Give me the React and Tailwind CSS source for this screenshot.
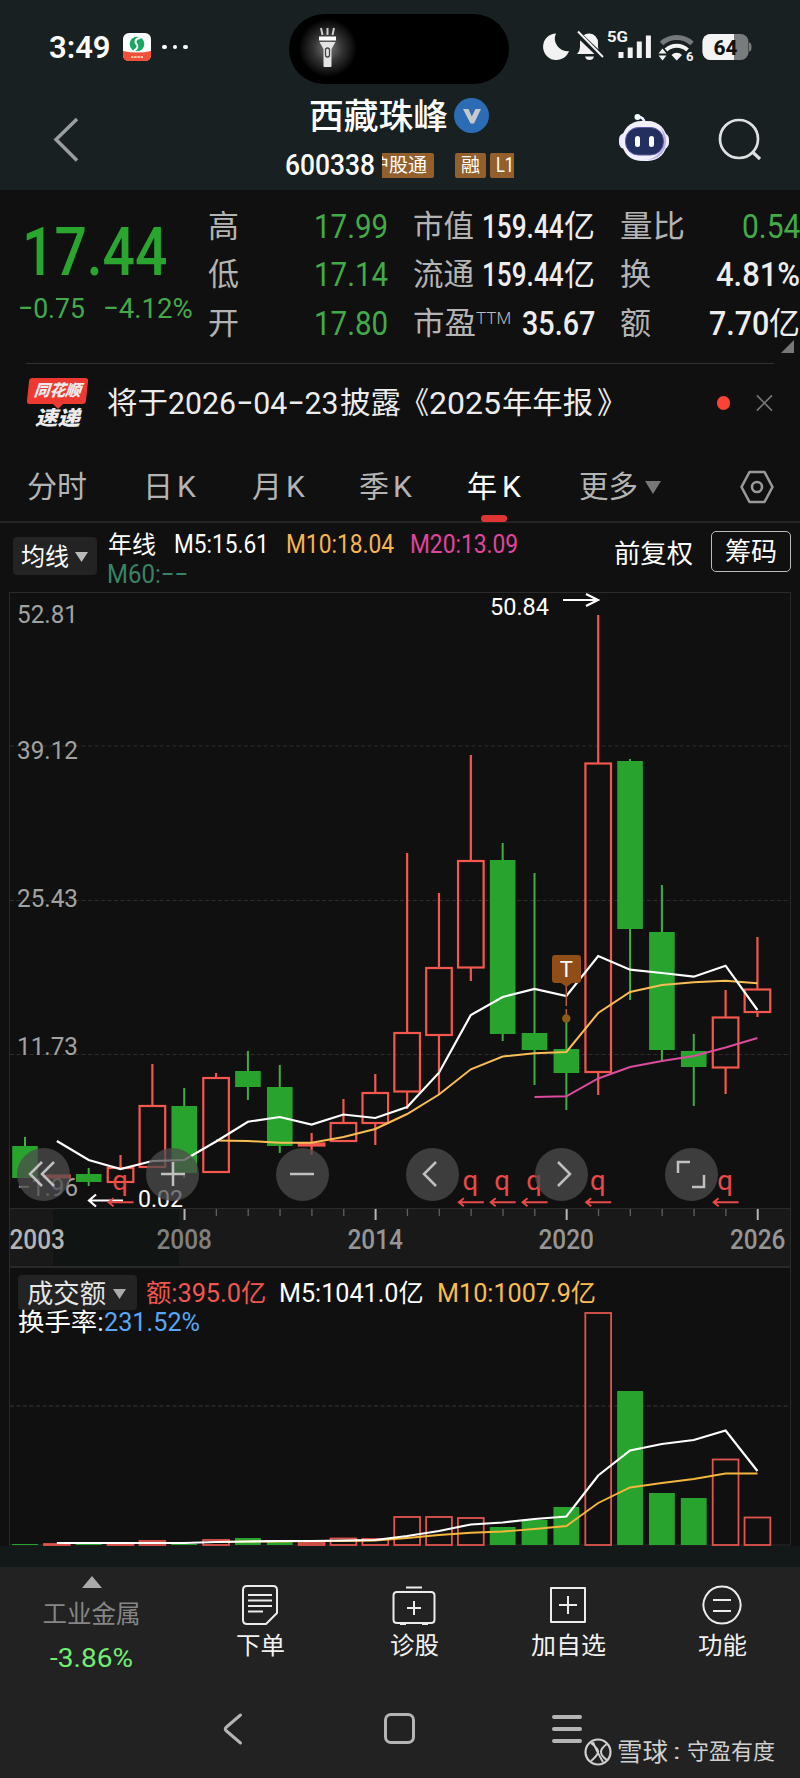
import { useLayoutEffect, useRef, useState } from 'react'

const RED = '#f4574e'
const GREEN = '#28a42e'

// x of the candle for a given index (0 = 2003)
const cx = (i) => 25 + i * 31.845

// [up, bodyTop, bodyBottom, high, low, volumeTop]
const years = [
  [false, 1146, 1178, 1137, 1178, 1544],
  [true, 1175.5, 1177.5, 1175, 1178, 1544],
  [false, 1174, 1182, 1168, 1186, 1544],
  [true, 1168, 1182, 1155, 1182, 1544],
  [true, 1106, 1167, 1064, 1167, 1541],
  [false, 1106, 1173, 1088, 1178, 1544],
  [true, 1078, 1172, 1073, 1172, 1540],
  [false, 1071, 1087, 1051, 1100, 1538],
  [false, 1087, 1146, 1065, 1153, 1541],
  [true, 1143.5, 1145.5, 1133, 1155, 1543],
  [true, 1123, 1141, 1099, 1141, 1538.5],
  [true, 1093, 1123, 1074, 1145, 1539],
  [true, 1033, 1091.5, 853, 1109, 1517],
  [true, 968, 1035, 893, 1095, 1517],
  [true, 861, 967.5, 755, 981, 1518],
  [false, 860, 1034, 843, 1041, 1527],
  [false, 1033, 1050, 873, 1085, 1520],
  [false, 1049, 1073, 1018, 1110, 1507],
  [true, 763.5, 1072, 615, 1095, 1313],
  [false, 761, 929, 759, 1000, 1391],
  [false, 932, 1050, 885, 1060, 1493],
  [false, 1051, 1067, 1034, 1106, 1498],
  [true, 1017.5, 1067.5, 990, 1094, 1459.5],
  [true, 989.5, 1012, 937, 1017, 1517.5],
]

const ma5 = [1141, 1160, 1169, 1161, 1160, 1141.5, 1121.7, 1117, 1124.5, 1114.5, 1118, 1107, 1072.7, 1015, 997, 989, 996, 956, 969.7, 973, 976.7, 965.7, 1010]
const ma10 = [1140.5, 1141, 1142.7, 1142.7, 1137, 1129, 1114, 1094.5, 1069.3, 1056.5, 1053.3, 1052, 1013, 992, 985, 982.3, 980.7, 983.3]
const ma20 = [1097, 1096.3, 1078.5, 1067, 1061, 1056, 1047.5, 1038]
const vol5 = [1543, 1543, 1543, 1543, 1543, 1542, 1541.5, 1541, 1541, 1540.5, 1540, 1536, 1531, 1524.5, 1522.5, 1519, 1516.5, 1475.5, 1450.5, 1444, 1440, 1430.5, 1471]
const vol10 = [1542, 1541.5, 1541.5, 1541, 1541, 1540.5, 1538, 1535, 1532.7, 1531.5, 1529, 1526, 1503, 1487.5, 1483, 1479, 1473.5, 1473.5]

// every series ends on the last candle
const line = (ys) => ys.map((y, n) => `${cx(24 - ys.length + n)},${y}`).join(' ')

function Fit({ w, className = '', children }) {
  const ref = useRef(null)
  const [scale, setScale] = useState(1)

  useLayoutEffect(() => {
    setScale(w / ref.current.offsetWidth)
  }, [w, children])

  return (
    <span className={`inline-block shrink-0 ${className}`} style={{ width: w }}>
      <span ref={ref} className="inline-block origin-left whitespace-nowrap" style={{ transform: `scaleX(${scale})` }}>
        {children}
      </span>
    </span>
  )
}

function StatusBar() {
  return (
    <div className="flex h-[94px] items-center pl-[49px] text-white">
      <Fit w={62} className="text-[32px] font-semibold">3:49</Fit>
      <svg className="ml-[12px]" width="28" height="28" viewBox="0 0 28 28">
        <rect width="28" height="28" rx="6" fill="#fff" />
        <path d="M0 18 Q14 21 28 18 V22 Q28 28 22 28 H6 Q0 28 0 22Z" fill="#f0503a" />
        <circle cx="14" cy="11" r="7.3" fill="#17a860" />
        <path d="M17.5 5c-5 0-6 4-4 6s1 5-2.5 6.5" fill="none" stroke="#fff" strokeWidth="2" />
        <path d="M8 24h12" stroke="#ffc9a8" strokeWidth="2" strokeDasharray="2.4 .8" />
      </svg>
      <div className="ml-[11px] flex gap-[6px]">
        <i className="size-[4.5px] rounded-full bg-white" />
        <i className="size-[4.5px] rounded-full bg-white" />
        <i className="size-[4.5px] rounded-full bg-white" />
      </div>
      <div className="ml-[101.5px] mt-[3px] h-[70px] w-[220px] overflow-hidden rounded-full bg-black">
        <svg width="100" height="70" viewBox="0 0 100 70">
          <defs>
            <radialGradient id="glow">
              <stop offset="0" stopColor="#7a7a7a" />
              <stop offset=".5" stopColor="#333" />
              <stop offset="1" stopColor="#000" />
            </radialGradient>
          </defs>
          <circle cx="39" cy="34" r="29" fill="url(#glow)" />
          <path d="M32 14l1.500 7M38.500 14v7M45 14l-1.500 7" stroke="#ccc" strokeWidth="2" />
          <path d="M30 22.500h17v4H30z" fill="#fff" />
          <path d="M30.500 28h16l-4 7v17q0 1-1 1h-6q-1 0-1-1V35z" fill="#e4e4e4" />
          <rect x="36.500" y="34" width="4" height="9" rx="2" fill="none" stroke="#444" strokeWidth="1.300" />
        </svg>
      </div>
      <svg className="ml-[29.500px]" width="220" height="36" viewBox="540 29 220 36">
        <path d="M557 33.500a13.300 13.300 0 1 0 13 17.500A12.500 12.500 0 0 1 557 33.500Z" fill="#f3f3f3" />
        <path d="M580 54h22q-3-3-3-7v-4a9 9 0 0 0-18-1v5q0 4-3 7zM586 56.500h9q-1 3.500-4.500 3.500t-4.500-3.500z" fill="#f3f3f3" />
        <path d="M577.500 32.500l26 25" stroke="#182022" strokeWidth="6" />
        <path d="M579 31.500l25 25.500" stroke="#f3f3f3" strokeWidth="2" />
        <text x="608" y="42" fontSize="14.500" fontWeight="700" fill="#f3f3f3" textLength="21" lengthAdjust="spacingAndGlyphs">5G</text>
        <path d="M622 52v6M631.200 47.500V58M640.300 41.500V58M649.400 35.500V58" stroke="#f3f3f3" strokeWidth="5" strokeLinecap="butt" />
        <path d="M662.500 43.500a22.500 22.500 0 0 1 30.500 0" fill="none" stroke="#76797a" strokeWidth="5" />
        <path d="M667 50a15.500 15.500 0 0 1 21.500 0" fill="none" stroke="#f3f3f3" strokeWidth="4" />
        <path d="M672.500 55a7.500 7.500 0 0 1 10.500 0l-5.300 5.500z" fill="#f3f3f3" />
        <path d="M659.500 53.500l4-5 4 5zM659.500 55.500l4 5 4-5z" fill="#f3f3f3" />
        <text x="687" y="60.500" fontSize="13" fontWeight="700" fill="#f3f3f3">6</text>
        <rect x="703.500" y="34" width="46" height="26" rx="8" fill="#797c7d" />
        <path d="M711.500 34H735v26h-23.500a8 8 0 0 1-8-8V42a8 8 0 0 1 8-8z" fill="#f3f3f3" />
        <path d="M750 42.500q2.500 0 2.500 4.500t-2.500 4.500z" fill="#797c7d" />
        <text x="714.500" y="54.500" fontSize="21" fontWeight="800" fill="#111" textLength="24" lengthAdjust="spacingAndGlyphs">64</text>
      </svg>
    </div>
  )
}

function TitleBar() {
  return (
    <div className="flex h-[96px] text-white">
      <svg className="ml-[50px] mt-[22px]" width="32" height="48" viewBox="0 0 32 48">
        <path d="M27 3L6 23.500 27 44.500" fill="none" stroke="#9b9d9e" strokeWidth="3.500" />
      </svg>
      <div className="ml-[203px] w-[240px]">
        <div className="ml-[24px] flex h-[43px] items-center">
          <Fit w={139} className="mt-[3px] text-[35px] font-medium">西藏珠峰</Fit>
          <svg className="ml-[6px]" width="35" height="35" viewBox="0 0 35 35">
            <circle cx="17.500" cy="17.500" r="17.500" fill="#2c6cb5" />
            <path d="M9 11h5.500l3.300 7.500L21.500 11H27l-7 14.500h-3.500z" fill="#c5c8cc" />
          </svg>
        </div>
        <div className="flex h-[55px] items-center pt-px text-[19px]">
          <Fit w={90} className="text-[29px] font-medium">600338</Fit>
          <div className="ml-[7px] flex h-[25px] w-[52px] items-center justify-end overflow-hidden rounded-r-xs bg-[#93602d] pr-[7px] whitespace-nowrap">沪股通</div>
          <div className="ml-[21px] flex h-[25px] w-[31px] items-center justify-center rounded-xs bg-[#93602d]">融</div>
          <div className="ml-[4px] flex h-[25px] w-[24px] items-center rounded-l-xs bg-[#93602d] pl-[6px]">
            <Fit w={18} className="text-[20px]">L1</Fit>
          </div>
        </div>
      </div>
      <svg className="ml-[92px] mt-[19px]" width="54" height="50" viewBox="617 113 54 50">
        <path d="M637 117q6-1 8 6" fill="none" stroke="#eef" strokeWidth="2.500" />
        <circle cx="637.500" cy="117" r="3" fill="#f0fffb" />
        <rect x="619" y="133" width="50" height="16" rx="6" fill="#eceafc" />
        <rect x="622" y="121" width="45" height="40" rx="19" fill="#f1effd" />
        <path d="M660 127q9 9 5 21-4 11-18 12h-9q14 2 22-8t0-25z" fill="#b9b1ee" />
        <rect x="625.500" y="127.500" width="38" height="27.500" rx="13" fill="#23305f" stroke="#5b58a8" strokeWidth="1" />
        <rect x="635" y="136" width="5" height="11" rx="2.500" fill="#fff" />
        <rect x="649" y="136" width="5" height="11" rx="2.500" fill="#fff" />
      </svg>
      <svg className="ml-[46px] mt-[22px]" width="46" height="46" viewBox="717 116 46 46">
        <circle cx="739" cy="139" r="19" fill="none" stroke="#dfe1e1" strokeWidth="2.700" />
        <path d="M752.500 152l7.500 7" stroke="#dfe1e1" strokeWidth="3.200" />
      </svg>
    </div>
  )
}

function Quote() {
  const label = 'text-[31px] font-normal text-[#b4b4b4]'
  return (
    <div className="relative flex h-[173px] pt-[12px]">
      <div className="w-[208px] text-[#2fa836]">
        <div className="flex h-[101px] items-center pl-[22px]">
          <Fit w={145} className="text-[66px] font-medium text-[#2aa52f]">17.44</Fit>
        </div>
        <div className="-mt-[8px] flex h-[28px] items-center gap-[18px] pl-[18px] text-[28.5px] text-[#44aa48]">
          <Fit w={67}>−0.75</Fit>
          <Fit w={90}>−4.12%</Fit>
        </div>
      </div>
      <div className="flex w-[180px] flex-col">
        {[['高', '17.99'], ['低', '17.14'], ['开', '17.80']].map(([name, value]) => (
          <div key={name} className="flex h-[48.5px] items-center justify-between">
            <span className={label}>{name}</span>
            <Fit w={74} className="text-[33.5px] text-[#44aa48]">{value}</Fit>
          </div>
        ))}
      </div>
      <div className="ml-[25px] flex w-[182px] flex-col text-[#ededed]">
        {[['市值', '159.44'], ['流通', '159.44']].map(([name, value]) => (
          <div key={name} className="flex h-[48.5px] items-center">
            <Fit w={61} className={label}>{name}</Fit>
            <Fit w={82} className="ml-[8px] text-[33.5px] font-medium">{value}</Fit>
            <Fit w={31} className="text-[31px]">亿</Fit>
          </div>
        ))}
        <div className="flex h-[48.5px] items-center">
          <Fit w={63} className={label}>市盈</Fit>
          <Fit w={35} className="-mt-[10px] text-[17px] font-light text-[#bdbdbd]">TTM</Fit>
          <Fit w={73} className="ml-auto text-[33.5px] font-medium">35.67</Fit>
        </div>
      </div>
      <div className="ml-[25px] flex w-[180px] flex-col text-[#ededed]">
        <div className="flex h-[48.5px] items-center justify-between">
          <Fit w={65} className={label}>量比</Fit>
          <Fit w={58} className="text-[33.5px] text-[#44aa48]">0.54</Fit>
        </div>
        <div className="flex h-[48.5px] items-center justify-between">
          <span className={label}>换</span>
          <Fit w={84} className="text-[33.5px] font-medium">4.81%</Fit>
        </div>
        <div className="flex h-[48.5px] items-center">
          <span className={label}>额</span>
          <Fit w={60} className="ml-auto text-[33.5px] font-medium">7.70</Fit>
          <span className="text-[31px]">亿</span>
        </div>
      </div>
      <svg className="absolute top-[150px] left-[781px]" width="13" height="13" viewBox="0 0 13 13">
        <path d="M13 0v13H0z" fill="#777" />
      </svg>
    </div>
  )
}

function News() {
  return (
    <div className="mx-[26px] flex h-[81px] items-center border-t border-[#2f3330] pb-[2px] text-[30px] text-[#ececec]">
      <div className="ml-[2px] flex w-[60px] flex-col items-center font-bold italic">
        <div className="flex h-[26px] w-[59px] -skew-x-6 items-center justify-center rounded-[3px] bg-[#ec3a33]">
          <Fit w={47} className="text-[16px] font-black">同花顺</Fit>
        </div>
        <svg width="10" height="5" viewBox="0 0 10 5"><path d="M0 0h10L5 5z" fill="#ec3a33" /></svg>
        <Fit w={45} className="-mt-px text-[20px] font-black">速递</Fit>
      </div>
      <Fit w={61} className="ml-[20px]">将于</Fit>
      <Fit w={170} className="text-[32px]">2026−04−23</Fit>
      <Fit w={61} className="ml-[2px]">披露</Fit>
      <Fit w={28}>《</Fit>
      <Fit w={72} className="text-[32px]">2025</Fit>
      <Fit w={91} className="ml-[1px]">年年报</Fit>
      <Fit w={30} className="ml-[4px]">》</Fit>
      <i className="ml-[90px] size-[14px] rounded-full bg-[#fb4237]" />
      <svg className="ml-[25px]" width="20" height="20" viewBox="0 0 20 20">
        <path d="M2 2l16 16M18 2L2 18" stroke="#777" strokeWidth="1.800" />
      </svg>
    </div>
  )
}

function Tabs() {
  return (
    <div className="mt-[6px] flex h-[73px] items-center border-b-2 border-[#242424] pt-[3px] pl-[27px] text-[30px] text-[#b4b4b4]">
      <span className="w-[116px] shrink-0">分时</span>
      <span className="w-[109px] shrink-0">日<span className="ml-[4px]">K</span></span>
      <span className="w-[107px] shrink-0">月<span className="ml-[4px]">K</span></span>
      <span className="w-[108px] shrink-0">季<span className="ml-[4px]">K</span></span>
      <span className="relative flex h-full w-[112px] shrink-0 items-center text-white">
        年<span className="ml-[5px]">K</span>
        <i className="absolute bottom-[-1px] left-[14px] h-[7px] w-[26px] rounded-full bg-[#e03535]" />
      </span>
      <Fit w={59}>更多</Fit>
      <svg className="ml-[7px]" width="16" height="13" viewBox="0 0 16 13"><path d="M0 0h16L8 13z" fill="#777" /></svg>
      <svg className="ml-[78px]" width="36" height="34" viewBox="0 0 36 34">
        <path d="M10.500 2h15l8 15-8 15h-15l-8-15z" fill="none" stroke="#999" strokeWidth="2.600" strokeLinejoin="round" />
        <circle cx="18" cy="17" r="5" fill="none" stroke="#999" strokeWidth="2.600" />
      </svg>
    </div>
  )
}

function Averages() {
  return (
    <div className="flex h-[69px] text-[25.5px] text-white">
      <button className="mt-[14px] ml-[13px] flex h-[38px] w-[84px] items-center rounded-[4px] bg-[#232323] pt-px pl-[8px]">
        <Fit w={48} className="text-[24px]">均线</Fit>
        <svg className="ml-[6px]" width="13" height="10" viewBox="0 0 13 10"><path d="M0 0h13L6.500 10z" fill="#bbb" /></svg>
      </button>
      <div className="ml-[10px] w-[420px]">
        <div className="mt-[7px] flex h-[30px] items-center">
          <Fit w={48} className="ml-[1px] text-[24px]">年线</Fit>
          <Fit w={95} className="ml-[18px]">M5:15.61</Fit>
          <Fit w={108} className="ml-[17px] text-[#f6b54f]">M10:18.04</Fit>
          <Fit w={108} className="ml-[16px] text-[#e0459e]">M20:13.09</Fit>
        </div>
        <div className="flex h-[30px] items-center">
          <Fit w={81} className="text-[#3a8265]">M60:−−</Fit>
        </div>
      </div>
      <Fit w={79} className="mt-[18px] ml-[87px] text-[26px]">前复权</Fit>
      <button className="mt-[8px] ml-[18px] flex h-[41px] w-[80px] items-center justify-center rounded-[5px] border border-[#bbb]">
        <Fit w={52} className="text-[26px]">筹码</Fit>
      </button>
    </div>
  )
}

function Wing({ x, y, color, w = 25, h = 4 }) {
  return <path d={`M${x + w} ${y}H${x}M${x + h + 1} ${y - h}L${x} ${y}l${h + 1} ${h}`} fill="none" stroke={color} strokeWidth={h > 4 ? 2.2 : 1.9} />
}

function CandleChart() {
  const axis = [['52.81', 622.5], ['39.12', 758.5], ['25.43', 906.5], ['11.73', 1054.5], ['−1.96', 1196]]
  const q = [3, 14, 15, 16, 18, 22]
  return (
    <div className="relative h-[676px]">
      <svg className="block" width="800" height="676" viewBox="0 592 800 676">
        <rect x="9" y="1208.500" width="782" height="58" fill="#191919" />
        <rect x="53" y="1208.500" width="126" height="58" fill="#101413" />
        <path d="M9.500 1268V592.500H790.500V1268M9.500 1208.500H790.500" fill="none" stroke="#2b2b2b" />
        <path d="M9 1267H791" stroke="#292929" strokeWidth="2" />
        <path d="M10 746H790M10 900.500H790M10 1054.500H790" stroke="#2e2e2e" strokeDasharray="4 2.500" />

        {axis.map(([t, y]) => (
          <text key={t} x="17" y={y} fontSize="26.500" fill="#a2a2a2" textLength="61" lengthAdjust="spacingAndGlyphs">{t}</text>
        ))}

        {years.map(([up, top, bottom, high, low], i) => up ? (
          <g key={i} stroke={RED} strokeWidth="2.200" fill="none">
            <path d={`M${cx(i)} ${high}V${top}M${cx(i)} ${bottom}V${low}`} />
            <rect x={cx(i) - 12.8} y={top} width="25.600" height={bottom - top} />
          </g>
        ) : (
          <g key={i} fill={GREEN}>
            <rect x={cx(i) - 1} y={high} width="2" height={low - high} fill="#3fae43" />
            <rect x={cx(i) - 12.8} y={top} width="25.600" height={bottom - top} />
          </g>
        ))}

        <polyline points={line(ma20)} fill="none" stroke="#d94c9e" strokeWidth="2" />
        <polyline points={line(ma10)} fill="none" stroke="#f9bd55" strokeWidth="2" />
        <polyline points={line(ma5)} fill="none" stroke="#fff" strokeWidth="2.200" />

        {/* trade marker */}
        <path d="M566.300 985v30" stroke="#b0602c" strokeWidth="1.500" strokeDasharray="21 3" />
        <circle cx="566.300" cy="1018.500" r="4.200" fill="#8d5c14" />
        <path d="M555 955h23a3 3 0 0 1 3 3v22a3 3 0 0 1-3 3h-6l-5.500 4-5.500-4h-6a3 3 0 0 1-3-3v-22a3 3 0 0 1 3-3z" fill="#8f4d17" />
        <text x="566.300" y="977" fontSize="22" fill="#fff" textAnchor="middle">T</text>

        <text x="490" y="614.500" fontSize="24" fill="#fff" textLength="59" lengthAdjust="spacingAndGlyphs">50.84</text>
        <path d="M563 600H598M586 594L598 600L586 606" fill="none" stroke="#fff" strokeWidth="2.200" />
        <text x="138" y="1207" fontSize="23.500" fill="#fff" textLength="45" lengthAdjust="spacingAndGlyphs">0.02</text>
        <Wing x={89} y={1200.5} color="#fff" w={34} h={6} />

        {q.map((i) => (
          <g key={i}>
            <text x={cx(i) - 0.5} y="1189.500" fontSize="27.500" fill="#e84a48" textAnchor="middle">q</text>
            <Wing x={cx(i) - 12} y={1202.3} color="#e84a48" />
          </g>
        ))}

        {years.map((_, i) => i >= 5 && (
          (i - 5) % 6 === 0
            ? <path key={i} d={`M${cx(i) + 0.3} 1209v11`} stroke="#b5b5b5" strokeWidth="2" />
            : <path key={i} d={`M${cx(i) + 0.3} 1209v7`} stroke="#606060" strokeWidth="1.300" />
        ))}
        {[['2003', 9.5, '#b4b4b4'], ['2008', 156.5, '#808080'], ['2014', 347.5, '#959595'], ['2020', 538.5, '#959595'], ['2026', 730, '#959595']].map(([t, x, c]) => (
          <text key={t} x={x} y="1248.500" fontSize="27" fontWeight="500" fill={c} textLength="55.500" lengthAdjust="spacingAndGlyphs">{t}</text>
        ))}
      </svg>

      {/* floating chart controls */}
      <div className="absolute top-[555.5px] left-[16.500px] flex gap-[76.700px]">
        {['M20-12L8 0l12 12M8-12L-4 0 8 12', 'M-12 0h24M0-12v24', 'M-12 0h24', 'M4-12L-8 0 4 12', 'M-4-12L8 0-4 12', 'M-13-1v-11h12M13 1v12H1'].map((d, i) => (
          <button key={d} className="flex size-[53px] items-center justify-center rounded-full bg-[#4c4c4c]/75">
            <svg width="40" height="32" viewBox="-20 -16 40 32">
              <path d={d} transform={i === 0 ? 'translate(-9 0)' : undefined} fill="none" stroke="#c0c0c0" strokeWidth="2.500" />
            </svg>
          </button>
        ))}
      </div>
    </div>
  )
}

function VolumeChart() {
  return (
    <div className="relative h-[278px] text-[25.5px]">
      <svg className="absolute top-0 left-0" width="800" height="278" viewBox="0 1268 800 278">
        <path d="M9.500 1268V1545H790.500V1268" fill="none" stroke="#2b2b2b" />
        <path d="M10 1406H790" stroke="#2b2b2b" strokeWidth="1.500" strokeDasharray="4 2.500" />
        {years.map(([up, , , , , top], i) => up ? (
          <rect key={i} x={cx(i) - 12.9} y={top} width="25.800" height={1545 - top} fill="none" stroke="#e0554e" strokeWidth="1.800" />
        ) : (
          <rect key={i} x={cx(i) - 12.9} y={top} width="25.800" height={1545 - top} fill={GREEN} />
        ))}
        <polyline points={line(vol10)} fill="none" stroke="#f5b63e" strokeWidth="1.900" />
        <polyline points={line(vol5)} fill="none" stroke="#fff" strokeWidth="2.200" />
      </svg>
      <div className="relative flex h-[42px] items-end pl-[18px] text-white">
        <button className="flex h-[35px] w-[119px] items-center rounded-[4px] bg-[#232323] pt-[2px] pl-[9px] text-[#e6e6e6]">
          <Fit w={79} className="text-[26px]">成交额</Fit>
          <svg className="ml-[7px]" width="13" height="10" viewBox="0 0 13 10"><path d="M0 0h13L6.500 10z" fill="#aaa" /></svg>
        </button>
        <div className="ml-[9px] flex h-[35px] items-center pt-[2px]">
          <Fit w={120} className="text-[#f0574f]">额:395.0亿</Fit>
          <Fit w={145} className="ml-[13px]">M5:1041.0亿</Fit>
          <Fit w={159} className="ml-[13px] text-[#f9bd4f]">M10:1007.9亿</Fit>
        </div>
      </div>
      <div className="relative -mt-[2px] flex h-[30px] items-center pl-[18px] text-white">
        <Fit w={86}>换手率:</Fit>
        <Fit w={96} className="text-[#58a6f5]">231.52%</Fit>
      </div>
    </div>
  )
}

const icons = [
  ['下单', 49, 'M-13-19h26q4 0 4 4v23l-11 11h-19q-4 0-4-4v-30q0-4 4-4zM-12-10h24M-12-4.500h24M-12 1h24M-12 6.500h15'],
  ['诊股', 49, 'M-17-13h34q3.500 0 3.500 3.500v24q0 3.500-3.500 3.500h-34q-3.500 0-3.500-3.500v-24q0-3.500 3.500-3.500zM-8-17.500h16M0-4v14M-7 3h14M-14 19h6M8 19h6'],
  ['加自选', 75, 'M-17-17h34v34h-34zM0-9v18M-9 0h18'],
  ['功能', 49, 'M0-18.500a18.500 18.500 0 1 0 .01 0M-9-5h18M-9 6h18'],
]

function Footer() {
  return (
    <div className="relative h-[211px] bg-[#222]">
      <div className="flex h-[115px] text-[24px] text-[#f2f2f2]">
        <div className="flex w-[183px] flex-col items-center">
          <svg className="mt-[9px]" width="20" height="12" viewBox="0 0 20 12"><path d="M10 0l10 12H0z" fill="#aaa" /></svg>
          <Fit w={98} className="mt-[15px] text-[24.500px] text-[#868686]">工业金属</Fit>
          <Fit w={83} className="mt-[18px] text-[25px] text-[#72ee72]">-3.86%</Fit>
        </div>
        {icons.map(([name, w, d]) => (
          <div key={name} className="flex w-[154px] flex-col items-center pt-[16px]">
            <svg width="46" height="44" viewBox="-23 -22 46 44">
              <path d={d} fill="none" stroke="#ececec" strokeWidth="2" strokeLinejoin="round" />
            </svg>
            <Fit w={w} className="mt-[7px]">{name}</Fit>
          </div>
        ))}
      </div>
      <div className="flex h-[92px] items-center pt-px pl-[221px]">
        <svg width="24" height="36" viewBox="0 0 24 36">
          <path d="M19.500 4L5.500 16q-2.500 2 0 4l14 12" fill="none" stroke="#b5b5b5" strokeWidth="3" strokeLinecap="round" />
        </svg>
        <div className="ml-[139px] size-[31px] rounded-[7px] border-3 border-[#b5b5b5]" />
        <div className="ml-[137px] flex flex-col gap-[8px]">
          <i className="h-[4px] w-[30px] rounded-full bg-[#b5b5b5]" />
          <i className="h-[4px] w-[30px] rounded-full bg-[#b5b5b5]" />
          <i className="h-[4px] w-[30px] rounded-full bg-[#b5b5b5]" />
        </div>
      </div>
      {/* watermark */}
      <div className="absolute top-[171px] left-[584px] flex items-center text-[#d0d0d0]">
        <svg width="28" height="28" viewBox="0 0 28 28">
          <circle cx="14" cy="14" r="12.500" fill="none" stroke="#d0d0d0" strokeWidth="2.200" />
          <path d="M7 5q8 6 7 9.500T7 23M23 6q-6 4-6 8t6 8M9 4q3 8 10 20" fill="none" stroke="#d0d0d0" strokeWidth="2" />
        </svg>
        <Fit w={51} className="ml-[5px] text-[25px]">雪球</Fit>
        <Fit w={7} className="ml-[5px] text-[22px]">:</Fit>
        <Fit w={88} className="ml-[7px] text-[22px]">守盈有度</Fit>
      </div>
    </div>
  )
}

function App() {
  return (
    <div className="h-[1778px] w-[800px] overflow-hidden bg-[#101010] font-[Roboto,'Noto_Sans_CJK_SC',sans-serif] leading-none">
      <div className="bg-[#182022]">
        <StatusBar />
        <TitleBar />
      </div>
      <Quote />
      <News />
      <Tabs />
      <Averages />
      <CandleChart />
      <VolumeChart />
      <div className="h-[21px] bg-[#131918]" />
      <Footer />
    </div>
  )
}

export default App
